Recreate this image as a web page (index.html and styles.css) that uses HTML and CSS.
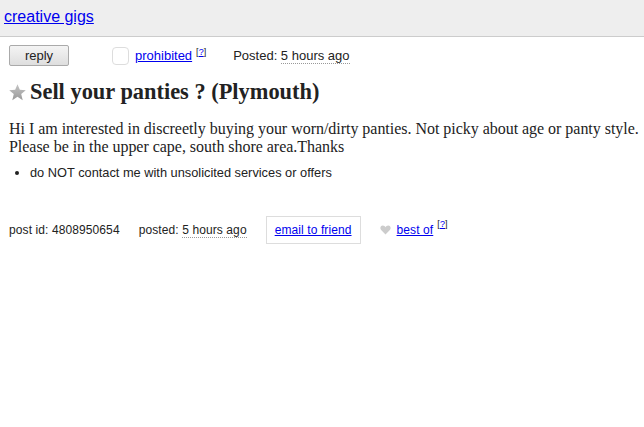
FILE: index.html
```html
<!DOCTYPE html>
<html>
<head>
<meta charset="utf-8">
<link rel="stylesheet" href="styles.css">
</head>
<body>
<header class="topbar">
  <a class="crumb" href="#">creative gigs</a>
</header>
<main class="page">
  <div class="actions">
    <button class="reply">reply</button>
    <span class="flag">
      <span class="flagbox"></span>
      <a href="#">prohibited</a><sup class="help">[<a href="#">?</a>]</sup>
    </span>
    <span class="posted">Posted: <span class="time">5 hours ago</span></span>
  </div>
  <h2 class="title">
    <svg class="star" viewBox="0 0 16 16" width="17" height="17"><defs><linearGradient id="sg" x1="0" y1="0" x2="0" y2="1"><stop offset="0" stop-color="#c4c4c4"/><stop offset="1" stop-color="#9a9a9a"/></linearGradient></defs><path d="M8 0.3 L10.2 5.5 L15.8 5.9 L11.5 9.5 L12.9 15.2 L8 12.1 L3.1 15.2 L4.5 9.5 L0.2 5.9 L5.8 5.5 Z" fill="url(#sg)"/></svg>
    <span>Sell your panties ? (Plymouth)</span>
  </h2>
  <section class="body">Hi I am interested in discreetly buying your worn/dirty panties. Not picky about age or panty style. Please be in the upper cape, south shore area.Thanks</section>
  <ul class="notices">
    <li>do NOT contact me with unsolicited services or offers</li>
  </ul>
  <div class="footer">
    <span>post id: 4808950654</span>
    <span>posted: <span class="time">5 hours ago</span></span>
    <span class="email"><a href="#">email to friend</a></span>
    <span class="bestof">
      <svg class="heart" viewBox="0 0 12 11" width="11" height="10"><path d="M6 10.5 L1.2 5.6 C-0.4 3.9 0.3 0.6 3 0.5 C4.4 0.5 5.4 1.4 6 2.4 C6.6 1.4 7.6 0.5 9 0.5 C11.7 0.6 12.4 3.9 10.8 5.6 Z" fill="#ccc"/></svg>
      <a href="#">best of</a><sup class="help">[<a href="#">?</a>]</sup>
    </span>
  </div>
</main>
</body>
</html>
```
FILE: styles.css
```css
html, body {
  margin: 0;
  padding: 0;
  background: #fff;
  color: #222;
  font-family: "Liberation Sans", Arial, sans-serif;
}
a { color: #00e; }
.topbar {
  height: 36px;
  background: #eee;
  border-bottom: 1px solid #ccc;
  padding: 0 4px;
  display: flex;
  align-items: center;
}
.crumb {
  font-size: 16px;
  padding-bottom: 2px;
}
.page {
  padding: 0 0 0 9px;
}
.actions {
  display: flex;
  align-items: center;
  margin-top: 8px;
  font-size: 13px;
  height: 21px;
}
.reply {
  width: 60px;
  height: 21px;
  font-family: "Liberation Sans", Arial, sans-serif;
  font-size: 13px;
  color: #222;
  border: 1px solid #aaa;
  border-radius: 2px;
  background: linear-gradient(#f4f4f4, #dedede);
  padding: 0;
  margin-right: 43px;
}
.flag {
  display: flex;
  align-items: center;
  margin-right: 27px;
}
.flagbox {
  width: 15px;
  height: 16px;
  border: 1px solid #ddd;
  border-radius: 4px;
  margin-right: 6px;
}
.help {
  font-size: 9px;
  margin-left: 4px;
  align-self: flex-start;
  color: #222;
}
.time {
  border-bottom: 1px dotted #999;
}
.title {
  display: flex;
  align-items: center;
  margin: 13px 0 0;
  font-family: "Liberation Serif", "Times New Roman", serif;
  font-size: 22.4px;
  font-weight: bold;
  color: #222;
}
.star {
  margin-right: 4px;
}
.body {
  margin-top: 15px;
  font-family: "Liberation Serif", "Times New Roman", serif;
  font-size: 16px;
  line-height: 18px;
  letter-spacing: -0.03px;
}
.notices {
  margin: 9px 0 0;
  padding-left: 21px;
  font-size: 12.8px;
}
.footer {
  display: flex;
  align-items: center;
  margin-top: 36px;
  font-size: 12px;
  letter-spacing: 0.1px;
  gap: 19px;
}
.email {
  border: 1px solid #ddd;
  padding: 6px 8px;
}
.bestof {
  display: flex;
  align-items: center;
}
.heart { margin-right: 6px; }
.bestof .help { margin-top: -4px; }
```
